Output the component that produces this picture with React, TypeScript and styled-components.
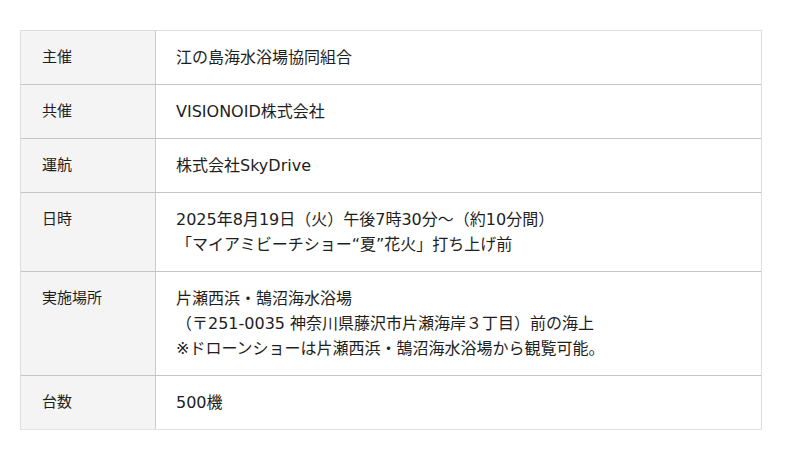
import * as React from 'react';
import styled, { createGlobalStyle } from 'styled-components';

const GlobalStyle = createGlobalStyle`
  body {
    margin: 0;
    background: #ffffff;
    font-family: "DejaVu Sans", "Noto Sans CJK JP", sans-serif;
    color: #1e1e1e;
  }
`;

interface Row {
  label: string;
  lines: string[];
}

const rows: Row[] = [
  { label: '主催', lines: ['江の島海水浴場協同組合'] },
  { label: '共催', lines: ['VISIONOID株式会社'] },
  { label: '運航', lines: ['株式会社SkyDrive'] },
  {
    label: '日時',
    lines: ['2025年8月19日（火）午後7時30分～（約10分間）', '「マイアミビーチショー“夏”花火」打ち上げ前']
  },
  {
    label: '実施場所',
    lines: [
      '片瀬西浜・鵠沼海水浴場',
      '（〒251-0035 神奈川県藤沢市片瀬海岸３丁目）前の海上',
      '※ドローンショーは片瀬西浜・鵠沼海水浴場から観覧可能。'
    ]
  },
  { label: '台数', lines: ['500機'] }
];

const App = () => (
  <Page>
    <GlobalStyle />
    <Table>
      {rows.map((row, i) => (
        <TableRow key={row.label} last={i === rows.length - 1}>
          <Label>{row.label}</Label>
          <Value>
            {row.lines.map(line => (
              <div key={line}>{line}</div>
            ))}
          </Value>
        </TableRow>
      ))}
    </Table>
  </Page>
);

const Page = styled.div`
  padding: 30px 38px 30px 20px;
`;

const Table = styled.div`
  width: 742px;
  border: 1px solid #dddddd;
  border-bottom-color: #e2e2e2;
  box-sizing: border-box;
`;

const TableRow = styled.div<{ last: boolean }>`
  display: grid;
  grid-template-columns: 135px 1fr;
  border-bottom: ${props => (props.last ? 'none' : '1px solid #c4c4c4')};
`;

const Label = styled.div`
  background: #f4f4f4;
  border-right: 1px solid #cccccc;
  padding: 14px 20px 14px 21px;
  font-size: 15px;
  line-height: 25px;
`;

const Value = styled.div`
  padding: 14px 20px;
  font-size: 16px;
  line-height: 25px;
`;

export default App;
